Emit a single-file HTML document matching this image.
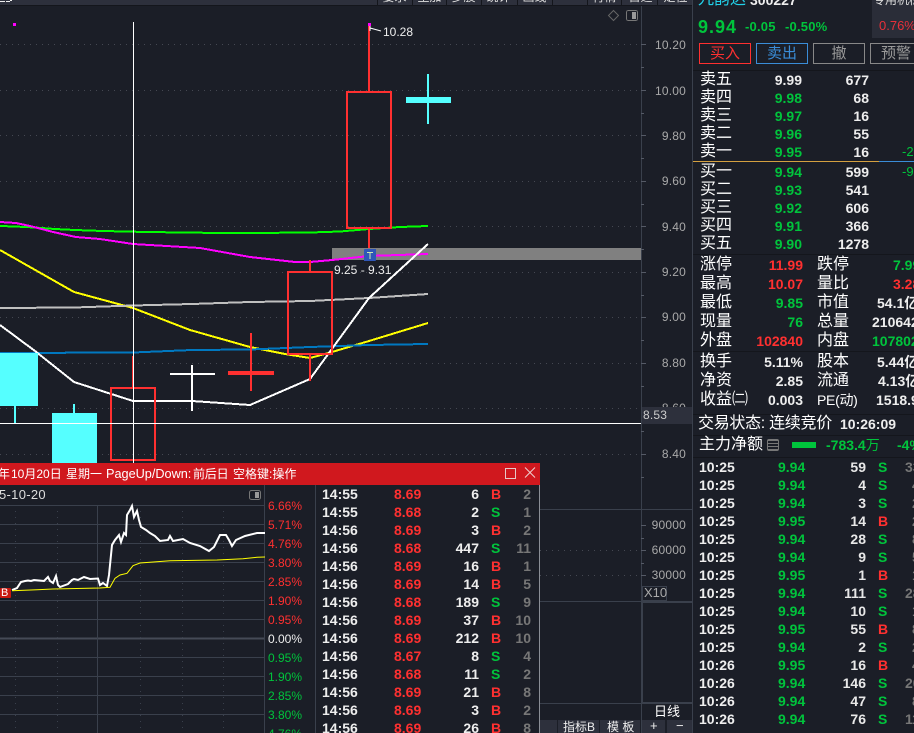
<!DOCTYPE html>
<html><head><meta charset="utf-8"><style>
html,body{margin:0;padding:0;width:914px;height:733px;overflow:hidden;background:#1b1e27}
body{position:relative;font-family:"Liberation Sans","Noto Sans CJK SC",sans-serif;color:#eee}
div,span,b{position:absolute;white-space:nowrap}
svg{position:absolute;left:0;top:0}
.ax{font-size:12px;line-height:16px;color:#a9a9a9;letter-spacing:.2px;text-align:right;width:50px}
.r{height:16px;line-height:16px;left:0;width:914px;font-size:14px;font-weight:bold}
.r span{line-height:16px}
.g{color:#00c43c}.d{color:#ff3030}.w{color:#eee}.y{color:#777}
.p{left:0;width:540px}
.p .a{left:322px}.p .b{left:394px}.p .c{right:435px}.p .e{left:491px;top:0;font-weight:bold;font-size:14px}.p .f{right:384px}
.p{position:absolute}
.o .l{left:700px;font-size:16px;font-weight:normal;color:#fff;line-height:16px}
.o .m{right:112px}.o .n{right:45px;color:#eee}
.s .l{left:700px;font-size:16px;font-weight:normal;color:#fff}
.s .m{right:111px}
.s .k{left:817px;font-size:16px;font-weight:normal;color:#fff}
.s .v{color:#eee}
.k2 .a{left:699px}.k2 .b{left:778px;color:#00c43c}.k2 .c{right:48px;color:#e8e8e8}.k2 .e{left:878px;top:0;font-weight:bold;font-size:14px}.k2 .f{left:905px;color:#777}
.pc{left:268px;font-size:12px;line-height:16px}
.bt{top:43px;height:19px;width:50px;border:1px solid #888;text-align:center;font-size:15px;line-height:19px;color:#999}
.tb{top:0;height:5px;background:#2d303c;overflow:hidden;font-size:12px;line-height:13px;text-align:center;color:#ddd}
.tb span{position:static;display:block;margin-top:-9px}
.hd{top:2px;font-size:12px;line-height:18px;color:#fff}
</style></head><body>
<svg width="914" height="733" viewBox="0 0 914 733" fill="none" shape-rendering="crispEdges">
<g stroke="#454852" stroke-width="1" stroke-dasharray="1 5">
<path d="M0 44.5H641M0 90.5H641M0 135.5H641M0 181.5H641M0 226.5H641M0 272.5H641M0 317.5H641M0 363.5H641M0 408.5H641M0 454.5H641M540 550.5H641M540 575.5H641"/>
</g>
<rect x="0" y="0" width="692" height="5" fill="#2d303c"/>
<path d="M0 5.5H692" stroke="#14161c"/>
<path d="M377.500 0V5M412.500 0V5M446.500 0V5M481.500 0V5M517.500 0V5M552.500 0V5M587.500 0V5M621.500 0V5M657.500 0V5" stroke="#14161c"/>
<path d="M0 1.500H5M6 1.500H10M10 0.500H12" stroke="#eee"/>
<path d="M641.5 6V733M692.5 0V733" stroke="#3a404c"/>
<path d="M641 44.5h5M641 67.5h3M641 90.5h5M641 113.5h3M641 135.5h5M641 158.5h3M641 181.5h5M641 204.5h3M641 226.5h5M641 249.5h3M641 272.5h5M641 295.5h3M641 317.5h5M641 340.5h3M641 363.5h5M641 386.5h3M641 431.5h3M641 454.5h5M641 477.5h3M641 525.5h5M641 538.5h3M641 550.5h5M641 563.5h3M641 575.5h5" stroke="#555a66"/>
<rect x="332" y="248" width="309" height="12" fill="#808080"/>
<g shape-rendering="crispEdges" stroke-linejoin="round" stroke-width="2">
<path d="M0 226L15 226.500L35 227.500L55 229L75 230L103 231L133 231.700L192 232.700L250 233L310 232.500L340 231.500L369 229L400 227L428 226" stroke="#00ff00"/>
<path d="M0 222L16 223L30 226L53 232L76 237L100 239L133 244L200 248L250 257L295 262L310 262L332 260L369 256L428 254" stroke="#ff00ff"/>
<path d="M0 250L74 292L133 308L190 330L250 347L285 354L310 358L332 352L369 341L428 323" stroke="#ffff00"/>
<path d="M0 308L74 307.500L133 305.500L192 304L250 302L310 301L369 298L428 294" stroke="#c0c0c0"/>
<path d="M0 353L133 352.500L192 350L250 349.500L310 347L369 345L428 344" stroke="#0078c0"/>
<path d="M0 325L35 351L74 382L133 401L192 401L250 405L310 379L369 298L428 244" stroke="#ffffff"/>
</g>
<rect x="0" y="353" width="38" height="53" fill="#55ffff"/>
<rect x="14" y="406" width="2" height="18" fill="#55ffff"/>
<rect x="52" y="413" width="45" height="52" fill="#55ffff"/>
<rect x="73" y="404" width="2" height="9" fill="#55ffff"/>
<rect x="111" y="388" width="44" height="72" stroke="#ff3030" stroke-width="2"/>
<path d="M132.500 356V388" stroke="#ff3030" stroke-width="1"/>
<rect x="170" y="373" width="45" height="2" fill="#fff"/><rect x="191" y="365" width="2" height="46" fill="#fff"/>
<rect x="228" y="371" width="46" height="4" fill="#ff3030"/><rect x="250" y="333" width="2" height="58" fill="#ff3030"/>
<rect x="288" y="272" width="44" height="82" stroke="#ff3030" stroke-width="2"/>
<rect x="309" y="260" width="2" height="12" fill="#ff3030"/><rect x="309" y="355" width="2" height="26" fill="#ff3030"/>
<rect x="347" y="92" width="44" height="136" stroke="#ff3030" stroke-width="2"/>
<rect x="368" y="24" width="2" height="67" fill="#ff3030"/><rect x="368" y="229" width="2" height="19" fill="#ff3030"/>
<rect x="406" y="97" width="45" height="6" fill="#55ffff"/><rect x="427" y="74" width="2" height="50" fill="#55ffff"/>
<rect x="133" y="22" width="1" height="443" fill="#fff"/>
<rect x="0" y="423" width="641" height="1" fill="#fff"/>
<rect x="13" y="23" width="3" height="3" fill="#ff00ff"/><rect x="368" y="23" width="3" height="3" fill="#ff00ff"/>
<path d="M370 28L381 31M370 26v5" stroke="#fff" shape-rendering="auto"/>
<path d="M613.500 10.500L618.500 15.500L613.500 20.500L608.500 15.500Z" stroke="#666" shape-rendering="auto"/>
<rect x="626.500" y="10.500" width="11" height="10" rx="2" stroke="#777"/><rect x="632" y="12" width="4" height="7" fill="#999"/>
<rect x="364" y="249" width="12" height="12" rx="1" fill="#2f57b8"/>
<path d="M367 252.500H373M370 252.500V259" stroke="#cfe8b0"/>
<path d="M540 509.500H692" stroke="#3a404c"/>
<path d="M540 601.500H692" stroke="#3a404c" stroke-width="1"/>
<rect x="642.500" y="586.500" width="24" height="14" stroke="#3a404c"/>
<rect x="642.500" y="602.500" width="50" height="100" stroke="#3a404c"/>
<path d="M540 703.500H692" stroke="#3a404c"/>
<rect x="540" y="720" width="100" height="13" fill="#2d303c"/><rect x="642" y="720" width="23" height="13" fill="#2d303c"/><rect x="667" y="720" width="25" height="13" fill="#2d303c"/>
<path d="M557.500 720V733M599.500 720V733" stroke="#1b1e27"/>
</svg>

<div class="tb" style="left:378px;width:33px"><span>要求</span></div>
<div class="tb" style="left:413px;width:33px"><span>至加</span></div>
<div class="tb" style="left:447px;width:33px"><span>多股</span></div>
<div class="tb" style="left:482px;width:33px"><span>统计</span></div>
<div class="tb" style="left:518px;width:33px"><span>画线</span></div>
<div class="tb" style="left:588px;width:33px"><span>行情</span></div>
<div class="tb" style="left:624px;width:33px"><span>自选</span></div>
<div class="tb" style="left:659px;width:33px"><span>定位</span></div>

<div class="ax" style="left:636px;top:37px">10.20</div>
<div class="ax" style="left:636px;top:83px">10.00</div>
<div class="ax" style="left:636px;top:128px">9.80</div>
<div class="ax" style="left:636px;top:173px">9.60</div>
<div class="ax" style="left:636px;top:219px">9.40</div>
<div class="ax" style="left:636px;top:264px">9.20</div>
<div class="ax" style="left:636px;top:309px">9.00</div>
<div class="ax" style="left:636px;top:355px">8.80</div>
<div class="ax" style="left:636px;top:400px">8.60</div>
<div class="ax" style="left:636px;top:446px">8.40</div>
<div style="left:642px;top:407px;height:17px;background:#2d303c;font-size:12px;line-height:16px;color:#ccc;padding-left:1px;width:49px;letter-spacing:.2px">8.53</div>
<div class="ax" style="left:636px;top:517px">90000</div>
<div class="ax" style="left:636px;top:542px">60000</div>
<div class="ax" style="left:636px;top:567px">30000</div>
<div style="left:644px;top:585px;font-size:13px;line-height:16px;color:#aaa">X10</div>
<div style="left:654px;top:703px;font-size:13px;line-height:17px;color:#fff">日线</div>
<div style="left:563px;top:720px;font-size:12px;line-height:14px;color:#eee">指标B</div>
<div style="left:607px;top:720px;font-size:12px;line-height:14px;color:#eee">模 板</div>
<div style="left:650px;top:719px;font-size:13px;line-height:14px;color:#eee">+</div>
<div style="left:676px;top:719px;font-size:13px;line-height:14px;color:#eee">−</div>
<div style="left:383px;top:24px;font-size:12px;line-height:16px;color:#eee">10.28</div>
<div style="left:334px;top:262px;font-size:12px;line-height:16px;color:#eee">9.25 - 9.31</div>

<!-- popup -->
<div style="left:0;top:463px;width:540px;height:22px;background:#d0181e;overflow:hidden">
<div class="hd" style="left:-2px">年</div>
<div class="hd" style="left:11px">10月20日</div>
<div class="hd" style="left:66px">星期一</div>
<div class="hd" style="left:106px;font-size:12.700px">PageUp/Down:</div>
<div class="hd" style="left:193px;letter-spacing:-.2px">前后日</div>
<div class="hd" style="left:233px">空格键:操作</div>
<div style="left:505px;top:5px;width:9px;height:9px;border:1px solid #e6c8c8"></div>
<svg width="540" height="22" style="left:0;top:0"><path d="M525 4.500L535 14.500M535 4.500L525 14.500" stroke="#eed0d0"/></svg>
</div>
<div style="left:0;top:485px;width:539px;height:248px;background:#1b1e27;border-right:1px solid #8a8e96"></div>
<svg width="540" height="733" fill="none">
<g stroke="#3a404c" shape-rendering="crispEdges">
<path d="M0 505.500H264M0 524.500H264M0 543.500H264M0 562.500H264M0 581.500H264M0 600.500H264M0 619.500H264M0 657.500H264M0 676.500H264M0 695.500H264M0 714.500H264"/>
<path d="M0 638.500H264" stroke-width="2" stroke="#454a56"/>
<path d="M97.500 505V733M264.500 485V733M315.500 485V733"/>
<path d="M15.500 505V733M57.500 505V733M140.500 505V733M182.500 505V733M223.500 505V733" stroke-dasharray="1 5"/>
</g>
<rect x="249.500" y="490.500" width="11" height="9" rx="2" stroke="#777"/><rect x="255" y="492" width="4" height="6" fill="#999"/>
<path d="M12 590L17 588L21 582L25 581L28 580.500L31 581L34 580L44 581L48 577L50 581L53 583L56 576L58 585L60 587L68 584L72 580L74 579L78 580L84 577L90 579L98 578.500L100 585L103 583L107 586L109 575L112 545L115 540L119 535L121 542L124 533L126 535L127 515L130 510L132 506L134 517L137 511L139 520L141 527L146 530L150 533L155 536L160 541L168 540L170 536L173 541L183 539L190 543L200 546L209 551L214 547L220 535L226 535L229 540L232 546L236 540L245 536L257 533L265 533" stroke="#fff" stroke-width="2"/>
<path d="M12 590.700L37 589.700L53 589L100 588L110 587.300L115 578.300L120 575L127 573.300L133 565.700L140 563L170 560.700L217 560L243 558.700L257 557.300L265 557" stroke="#ffff00" stroke-width="1"/>
<rect x="0" y="588" width="11" height="10" rx="1" fill="#c8180f"/>
</svg>
<div style="left:1px;top:586px;font-size:11px;line-height:14px;color:#fff">B</div>
<div style="left:-1px;top:487px;font-size:13px;line-height:16px;color:#ddd;letter-spacing:.3px">5-10-20</div>
<div class="pc d" style="top:498px">6.66%</div>
<div class="pc d" style="top:517px">5.71%</div>
<div class="pc d" style="top:536px">4.76%</div>
<div class="pc d" style="top:555px">3.80%</div>
<div class="pc d" style="top:574px">2.85%</div>
<div class="pc d" style="top:593px">1.90%</div>
<div class="pc d" style="top:612px">0.95%</div>
<div class="pc w" style="top:631px">0.00%</div>
<div class="pc g" style="top:650px">0.95%</div>
<div class="pc g" style="top:669px">1.90%</div>
<div class="pc g" style="top:688px">2.85%</div>
<div class="pc g" style="top:707px">3.80%</div>
<div class="pc g" style="top:726px">4.76%</div>

<div class="p" style="left:0;top:0;height:733px;overflow:hidden">
<div class="r" style="top:486px;width:914px"><span class="a">14:55</span><span class="b d">8.69</span><b style="left:440px;width:39px;text-align:right">6</b><span class="e d">B</span><b style="left:510px;width:21px;text-align:right;color:#777">2</b></div>
<div class="r" style="top:504px;width:914px"><span class="a">14:55</span><span class="b d">8.68</span><b style="left:440px;width:39px;text-align:right">2</b><span class="e g">S</span><b style="left:510px;width:21px;text-align:right;color:#777">1</b></div>
<div class="r" style="top:522px;width:914px"><span class="a">14:56</span><span class="b d">8.69</span><b style="left:440px;width:39px;text-align:right">3</b><span class="e d">B</span><b style="left:510px;width:21px;text-align:right;color:#777">2</b></div>
<div class="r" style="top:540px;width:914px"><span class="a">14:56</span><span class="b d">8.68</span><b style="left:440px;width:39px;text-align:right">447</b><span class="e g">S</span><b style="left:510px;width:21px;text-align:right;color:#777">11</b></div>
<div class="r" style="top:558px;width:914px"><span class="a">14:56</span><span class="b d">8.69</span><b style="left:440px;width:39px;text-align:right">16</b><span class="e d">B</span><b style="left:510px;width:21px;text-align:right;color:#777">1</b></div>
<div class="r" style="top:576px;width:914px"><span class="a">14:56</span><span class="b d">8.69</span><b style="left:440px;width:39px;text-align:right">14</b><span class="e d">B</span><b style="left:510px;width:21px;text-align:right;color:#777">5</b></div>
<div class="r" style="top:594px;width:914px"><span class="a">14:56</span><span class="b d">8.68</span><b style="left:440px;width:39px;text-align:right">189</b><span class="e g">S</span><b style="left:510px;width:21px;text-align:right;color:#777">9</b></div>
<div class="r" style="top:612px;width:914px"><span class="a">14:56</span><span class="b d">8.69</span><b style="left:440px;width:39px;text-align:right">37</b><span class="e d">B</span><b style="left:510px;width:21px;text-align:right;color:#777">10</b></div>
<div class="r" style="top:630px;width:914px"><span class="a">14:56</span><span class="b d">8.69</span><b style="left:440px;width:39px;text-align:right">212</b><span class="e d">B</span><b style="left:510px;width:21px;text-align:right;color:#777">10</b></div>
<div class="r" style="top:648px;width:914px"><span class="a">14:56</span><span class="b d">8.67</span><b style="left:440px;width:39px;text-align:right">8</b><span class="e g">S</span><b style="left:510px;width:21px;text-align:right;color:#777">4</b></div>
<div class="r" style="top:666px;width:914px"><span class="a">14:56</span><span class="b d">8.68</span><b style="left:440px;width:39px;text-align:right">11</b><span class="e g">S</span><b style="left:510px;width:21px;text-align:right;color:#777">2</b></div>
<div class="r" style="top:684px;width:914px"><span class="a">14:56</span><span class="b d">8.69</span><b style="left:440px;width:39px;text-align:right">21</b><span class="e d">B</span><b style="left:510px;width:21px;text-align:right;color:#777">8</b></div>
<div class="r" style="top:702px;width:914px"><span class="a">14:56</span><span class="b d">8.69</span><b style="left:440px;width:39px;text-align:right">3</b><span class="e d">B</span><b style="left:510px;width:21px;text-align:right;color:#777">2</b></div>
<div class="r" style="top:720px;width:914px"><span class="a">14:56</span><span class="b d">8.69</span><b style="left:440px;width:39px;text-align:right">26</b><span class="e d">B</span><b style="left:510px;width:21px;text-align:right;color:#777">8</b></div>
</div>

<!-- right panel -->
<div style="left:698px;top:-9px;font-size:16px;line-height:18px;color:#22d0e8">九韵达</div>
<div style="left:750px;top:-9px;font-size:14px;font-weight:bold;line-height:18px;color:#eee">300227</div>
<div style="left:872px;top:0;width:42px;height:38px;background:#2a2d38;overflow:hidden">
<div style="left:1px;top:-8px;font-size:12px;line-height:16px;color:#ddd">专用机械</div>
<div style="left:7px;top:18px;font-size:13px;line-height:16px;color:#e8303a">0.76%</div>
</div>
<div class="g" style="left:698px;top:16px;font-size:18px;font-weight:bold;line-height:22px;letter-spacing:1px">9.94</div>
<div class="g" style="left:745px;top:19px;font-size:13px;font-weight:bold;line-height:16px;letter-spacing:.2px">-0.05</div>
<div class="g" style="left:785px;top:19px;font-size:13px;font-weight:bold;line-height:16px;letter-spacing:.2px">-0.50%</div>
<div class="bt" style="left:699px;border-color:#ff3030;color:#ff3030">买入</div>
<div class="bt" style="left:756px;border-color:#3a8dd8;color:#3a8dd8">卖出</div>
<div class="bt" style="left:813px">撤</div>
<div class="bt" style="left:870px">预警</div>
<div style="left:693px;top:70px;width:221px;height:1px;background:#14161c"></div>

<div class="r o" style="top:72px"><span class="l">卖五</span><span class="m w">9.99</span><span class="n">677</span></div>
<div class="r o" style="top:90px"><span class="l">卖四</span><span class="m g">9.98</span><span class="n">68</span></div>
<div class="r o" style="top:108px"><span class="l">卖三</span><span class="m g">9.97</span><span class="n">16</span></div>
<div class="r o" style="top:126px"><span class="l">卖二</span><span class="m g">9.96</span><span class="n">55</span></div>
<div class="r o" style="top:144px"><span class="l">卖一</span><span class="m g">9.95</span><span class="n">16</span><span class="g" style="left:902px;font-weight:normal;font-size:13px">-2</span></div>
<div style="left:693px;top:161px;width:186px;height:1px;background:#d4a040"></div>
<div style="left:879px;top:161px;width:35px;height:1px;background:#3a8dd8"></div>
<div class="r o" style="top:164px"><span class="l">买一</span><span class="m g">9.94</span><span class="n">599</span><span class="g" style="left:902px;font-weight:normal;font-size:13px">-9</span></div>
<div class="r o" style="top:182px"><span class="l">买二</span><span class="m g">9.93</span><span class="n">541</span></div>
<div class="r o" style="top:200px"><span class="l">买三</span><span class="m g">9.92</span><span class="n">606</span></div>
<div class="r o" style="top:218px"><span class="l">买四</span><span class="m g">9.91</span><span class="n">366</span></div>
<div class="r o" style="top:236px"><span class="l">买五</span><span class="m g">9.90</span><span class="n">1278</span></div>
<div style="left:693px;top:254px;width:221px;height:1px;background:#14161c"></div>

<div class="r s" style="top:257px"><span class="l">涨停</span><span class="m d">11.99</span><span class="k">跌停</span><span class="g" style="left:893px">7.99</span></div>
<div class="r s" style="top:276px"><span class="l">最高</span><span class="m d">10.07</span><span class="k">量比</span><span class="d" style="left:893px">3.28</span></div>
<div class="r s" style="top:295px"><span class="l">最低</span><span class="m g">9.85</span><span class="k">市值</span><span class="v" style="left:877px">54.1亿</span></div>
<div class="r s" style="top:314px"><span class="l">现量</span><span class="m g">76</span><span class="k">总量</span><span class="v" style="left:872px">210642</span></div>
<div class="r s" style="top:333px"><span class="l">外盘</span><span class="m d">102840</span><span class="k">内盘</span><span class="g" style="left:872px">107802</span></div>
<div style="left:693px;top:351px;width:221px;height:1px;background:#14161c"></div>
<div class="r s" style="top:354px"><span class="l">换手</span><span class="m v">5.11%</span><span class="k">股本</span><span class="v" style="left:877px">5.44亿</span></div>
<div class="r s" style="top:373px"><span class="l">净资</span><span class="m v">2.85</span><span class="k">流通</span><span class="v" style="left:878px">4.13亿</span></div>
<div class="r s" style="top:392px"><span class="l">收益㈡</span><span class="m v">0.003</span><span class="k" style="font-size:14px;letter-spacing:-.3px">PE(动)</span><span class="v" style="left:876px">1518.9</span></div>
<div style="left:693px;top:414px;width:221px;height:1px;background:#14161c"></div>
<div style="left:698px;top:415px;font-size:16px;line-height:18px;color:#fff;letter-spacing:-.3px">交易状态: 连续竞价</div>
<div style="left:840px;top:416px;font-size:14px;font-weight:bold;line-height:16px;color:#eee">10:26:09</div>
<div style="left:693px;top:435px;width:221px;height:1px;background:#14161c"></div>
<div style="left:699px;top:436px;font-size:16px;line-height:18px;color:#fff">主力净额</div>
<div style="left:767px;top:439px;width:10px;height:10px;border:1px solid #777;border-radius:2px;background:repeating-linear-gradient(#777 0 1px,#1b1e27 1px 3px)"></div>
<div style="left:792px;top:442px;width:24px;height:6px;background:#00c43c"></div>
<div class="g" style="left:826px;top:436px;font-size:14px;font-weight:bold;line-height:18px">-783.4<span style="position:static;font-weight:normal">万</span></div>
<div class="g" style="left:897px;top:437px;font-size:14px;font-weight:bold;line-height:16px">-4%</div>
<div style="left:693px;top:457px;width:221px;height:1px;background:#14161c"></div>

<div class="r k2" style="top:459px"><span class="a">10:25</span><span class="b">9.94</span><span class="c">59</span><span class="e g">S</span><span class="f">33</span></div>
<div class="r k2" style="top:477px"><span class="a">10:25</span><span class="b">9.94</span><span class="c">4</span><span class="e g">S</span><span class="f" style="left:912px">4</span></div>
<div class="r k2" style="top:495px"><span class="a">10:25</span><span class="b">9.94</span><span class="c">3</span><span class="e g">S</span><span class="f" style="left:912px">2</span></div>
<div class="r k2" style="top:513px"><span class="a">10:25</span><span class="b">9.95</span><span class="c">14</span><span class="e d">B</span><span class="f" style="left:912px">2</span></div>
<div class="r k2" style="top:531px"><span class="a">10:25</span><span class="b">9.94</span><span class="c">28</span><span class="e g">S</span><span class="f" style="left:912px">8</span></div>
<div class="r k2" style="top:549px"><span class="a">10:25</span><span class="b">9.94</span><span class="c">9</span><span class="e g">S</span><span class="f" style="left:912px">5</span></div>
<div class="r k2" style="top:567px"><span class="a">10:25</span><span class="b">9.95</span><span class="c">1</span><span class="e d">B</span><span class="f" style="left:912px">1</span></div>
<div class="r k2" style="top:585px"><span class="a">10:25</span><span class="b">9.94</span><span class="c">111</span><span class="e g">S</span><span class="f">28</span></div>
<div class="r k2" style="top:603px"><span class="a">10:25</span><span class="b">9.94</span><span class="c">10</span><span class="e g">S</span><span class="f" style="left:912px">1</span></div>
<div class="r k2" style="top:621px"><span class="a">10:25</span><span class="b">9.95</span><span class="c">55</span><span class="e d">B</span><span class="f" style="left:912px">8</span></div>
<div class="r k2" style="top:639px"><span class="a">10:25</span><span class="b">9.94</span><span class="c">2</span><span class="e g">S</span><span class="f" style="left:912px">2</span></div>
<div class="r k2" style="top:657px"><span class="a">10:26</span><span class="b">9.95</span><span class="c">16</span><span class="e d">B</span><span class="f" style="left:912px">4</span></div>
<div class="r k2" style="top:675px"><span class="a">10:26</span><span class="b">9.94</span><span class="c">146</span><span class="e g">S</span><span class="f">20</span></div>
<div class="r k2" style="top:693px"><span class="a">10:26</span><span class="b">9.94</span><span class="c">47</span><span class="e g">S</span><span class="f" style="left:912px">8</span></div>
<div class="r k2" style="top:711px"><span class="a">10:26</span><span class="b">9.94</span><span class="c">76</span><span class="e g">S</span><span class="f">11</span></div>
</body></html>
